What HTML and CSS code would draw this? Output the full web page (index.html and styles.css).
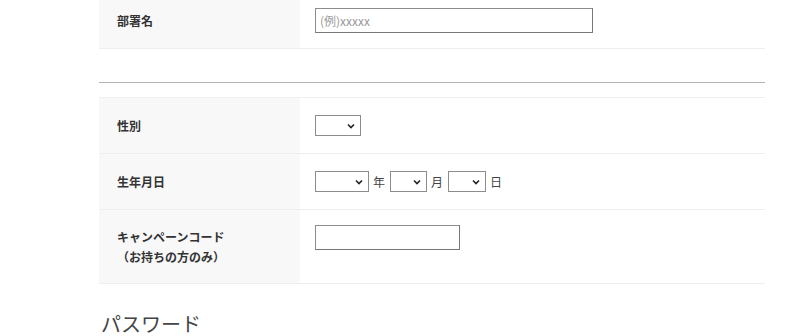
FILE: index.html
```html
<!DOCTYPE html>
<html lang="ja">
<head>
<meta charset="utf-8">
<link rel="stylesheet" href="styles.css">
</head>
<body>
<div class="wrap">
  <div class="table">
    <div class="row">
      <div class="label">部署名</div>
      <div class="value"><input class="text wide" type="text" placeholder="(例)xxxxx"></div>
    </div>
  </div>
  <hr class="sep">
  <div class="table bordered">
    <div class="row">
      <div class="label">性別</div>
      <div class="value">
        <span class="sel w46"><select></select><svg class="chev" viewBox="0 0 8 6"><path d="M1 1.5 L4 4.5 L7 1.5" fill="none" stroke="#222" stroke-width="1.6"/></svg></span>
      </div>
    </div>
    <div class="row">
      <div class="label">生年月日</div>
      <div class="value">
        <span class="sel w54"><select></select><svg class="chev" viewBox="0 0 8 6"><path d="M1 1.5 L4 4.5 L7 1.5" fill="none" stroke="#222" stroke-width="1.6"/></svg></span>
        <span class="unit">年</span>
        <span class="sel w37"><select></select><svg class="chev" viewBox="0 0 8 6"><path d="M1 1.5 L4 4.5 L7 1.5" fill="none" stroke="#222" stroke-width="1.6"/></svg></span>
        <span class="unit">月</span>
        <span class="sel w38"><select></select><svg class="chev" viewBox="0 0 8 6"><path d="M1 1.5 L4 4.5 L7 1.5" fill="none" stroke="#222" stroke-width="1.6"/></svg></span>
        <span class="unit">日</span>
      </div>
    </div>
    <div class="row tall">
      <div class="label two">キャンペーンコード<br>（お持ちの方のみ）</div>
      <div class="value top"><input class="text short" type="text"></div>
    </div>
  </div>
  <h2 class="heading">パスワード</h2>
</div>
</body>
</html>
```

FILE: styles.css
```css
html, body {
  margin: 0;
  padding: 0;
  background: #fff;
}
body {
  font-family: "Noto Sans CJK JP", "Noto Sans", sans-serif;
  color: #333;
  overflow: hidden;
}
.wrap {
  width: 666px;
  margin: -7px 0 0 99px;
}
.table.bordered {
  border-top: 1px solid #f0f0f0;
}
.row {
  display: flex;
  border-bottom: 1px solid #eeeeee;
  height: 55px;
}
.row.tall {
  height: 73px;
}
.label {
  width: 201px;
  box-sizing: border-box;
  background: #f8f8f8;
  padding: 0 18px;
  display: flex;
  align-items: center;
  font-size: 12px;
  font-weight: bold;
  line-height: 20px;
  color: #333;
}
.label.two {
  align-items: flex-start;
  padding-top: 17px;
}
.value {
  flex: 1;
  padding: 0 15px;
  display: flex;
  align-items: center;
}
.value.top {
  align-items: flex-start;
  padding-top: 15px;
}
.text {
  box-sizing: border-box;
  height: 25px;
  border: 1px solid #8c8c8c;
  border-right-color: #777;
  border-bottom-color: #777;
  padding: 0 4px;
  font-family: inherit;
  font-size: 12px;
  color: #333;
  background: #fff;
  outline: none;
  margin: 0;
}
.text::placeholder {
  color: #9a9a9a;
}
.text.wide {
  width: 278px;
}
.text.short {
  width: 145px;
}
.sel {
  position: relative;
  display: inline-block;
  height: 21px;
}
.sel select {
  -webkit-appearance: none;
  appearance: none;
  box-sizing: border-box;
  width: 100%;
  height: 21px;
  margin: 0;
  border: 1px solid #8c8c8c;
  border-radius: 0;
  background: #fff;
  display: block;
}
.chev {
  position: absolute;
  right: 6px;
  top: 8px;
  width: 8px;
  height: 6px;
}
.w46 { width: 46px; }
.w54 { width: 54px; }
.w37 { width: 37px; }
.w38 { width: 38px; }
.unit {
  font-size: 12px;
  color: #444;
  margin: 0 5px 0 4px;
}
.sep {
  border: 0;
  border-top: 1px solid #b4b4b4;
  margin: 33px 0 14px;
  height: 0;
}
.heading {
  font-size: 20px;
  font-weight: normal;
  color: #444;
  margin: 26px 0 0 2px;
  line-height: 28px;
}
```
